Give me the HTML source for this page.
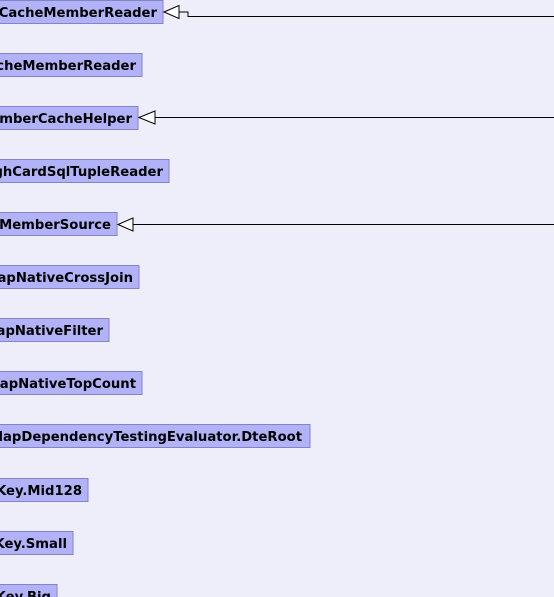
<!DOCTYPE html>
<html><head><style>html,body{margin:0;padding:0;background:#eeeefb;overflow:hidden}svg{display:block}</style></head>
<body>
<svg width="554" height="597" xmlns="http://www.w3.org/2000/svg" font-family="DejaVu Sans, sans-serif" font-weight="bold" font-size="13.2">
<rect width="554" height="597" fill="#eeeefb"/>
<g fill="#b2b2f8" stroke="#8484c4" stroke-width="1">
<rect x="-10" y="0.5" width="173" height="23"/>
<rect x="-10" y="53.5" width="152" height="23"/>
<rect x="-10" y="106.5" width="148" height="23"/>
<rect x="-10" y="159.5" width="179" height="23"/>
<rect x="-10" y="212.5" width="127" height="23"/>
<rect x="-10" y="265.5" width="149" height="23"/>
<rect x="-10" y="318.5" width="119" height="23"/>
<rect x="-10" y="371.5" width="152" height="23"/>
<rect x="-10" y="424.5" width="320" height="23"/>
<rect x="-10" y="478.5" width="98" height="23"/>
<rect x="-10" y="531.5" width="83" height="23"/>
<rect x="-10" y="584.5" width="67" height="23"/>
</g>
<g fill="#000" text-anchor="end">
<text x="157" y="17">CacheMemberReader</text>
<text x="136" y="70">cheMemberReader</text>
<text x="132" y="123">mberCacheHelper</text>
<text x="163" y="176">ghCardSqlTupleReader</text>
<text x="111" y="229">MemberSource</text>
<text x="133" y="282">apNativeCrossJoin</text>
<text x="103" y="335">apNativeFilter</text>
<text x="136" y="388">apNativeTopCount</text>
<text x="302" y="441">lapDependencyTestingEvaluator.DteRoot</text>
<text x="82" y="495">Key.Mid128</text>
<text x="67" y="548">Key.Small</text>
<text x="51" y="601">Key.Big</text>
</g>
<g stroke="#000" stroke-width="1" fill="none">
<polyline points="179,12 188,12 188,16.5 554,16.5"/>
<line x1="154" y1="117.5" x2="554" y2="117.5"/>
<line x1="133" y1="224.5" x2="554" y2="224.5"/>
</g>
<g stroke="#000" stroke-width="1" fill="#fff">
<polygon points="164,12 179,5.5 179,18.5"/>
<polygon points="139,117.5 155,111 155,124"/>
<polygon points="118,224.5 133,218 133,231"/>
</g>
</svg>
</body></html>
